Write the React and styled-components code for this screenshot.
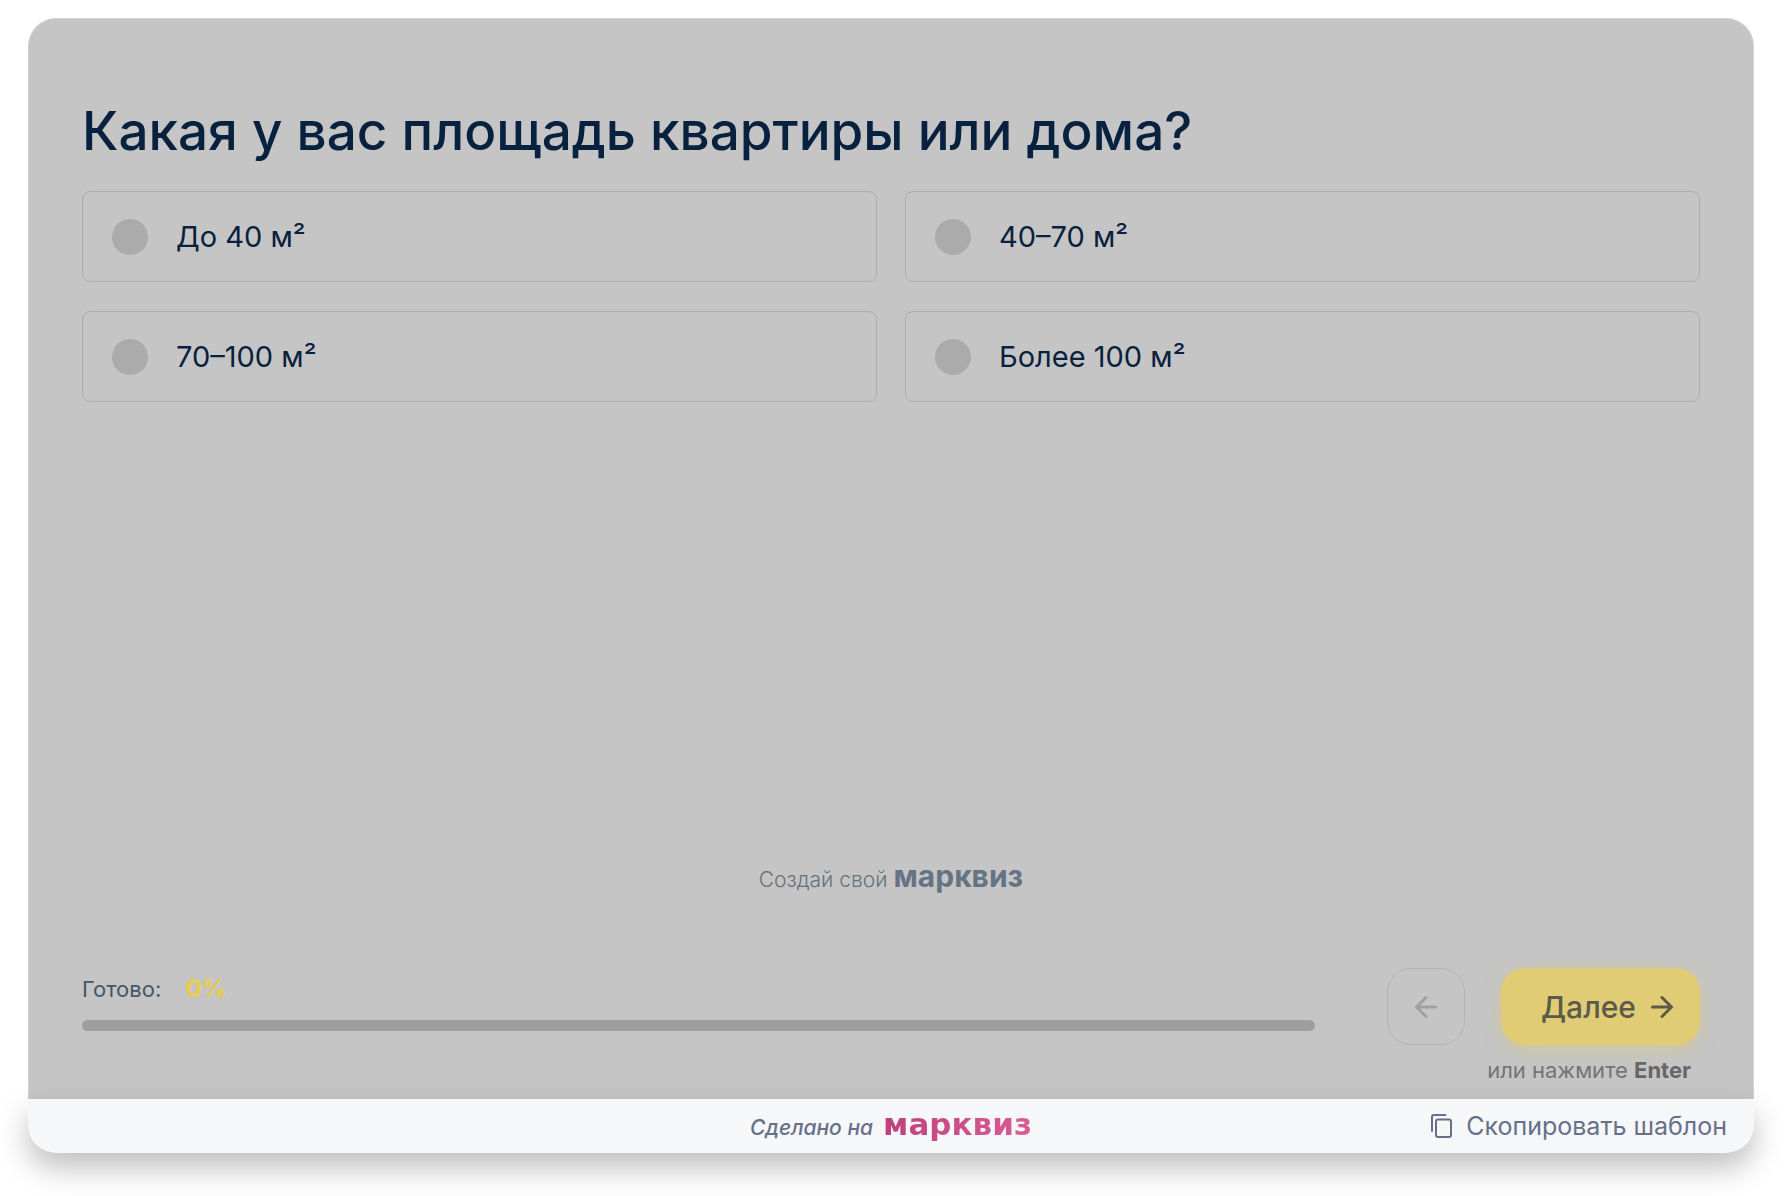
import React from "react";
import styled, { createGlobalStyle } from "styled-components";

const GlobalStyle = createGlobalStyle`
  *, *::before, *::after { box-sizing: border-box; }
  body { margin: 0; background: #fff; }
`;

const sans = `Inter, "Open Sans", "Noto Sans", sans-serif`;

const Page = styled.div`
  display: flex;
  min-height: 100vh;
  padding: 18px 36px 43px 28px;
  font-family: ${sans};
  color: #08213f;
`;

const Card = styled.main`
  flex: 1;
  display: flex;
  flex-direction: column;
`;

const Quiz = styled.form`
  flex: 1;
  display: flex;
  flex-direction: column;
  padding: 80px 53px 14px;
  border: 1px solid #d2d2d2;
  border-bottom: 0;
  border-radius: 28px 28px 0 0;
  background: #c5c5c5;
`;

const Title = styled.h1`
  margin: 0 0 28px;
  font-size: 53px;
  line-height: 64px;
  font-weight: 500;
`;

const Options = styled.div`
  display: grid;
  grid-template-columns: 1fr 1fr;
  gap: 29px 28px;
`;

const OptionLabel = styled.label`
  display: flex;
  align-items: center;
  gap: 28px;
  min-height: 91px;
  padding: 0 29px;
  border: 1px solid #adadad;
  border-radius: 8px;
  font-size: 29px;
  line-height: 36px;
  cursor: pointer;
`;

const Radio = styled.input`
  appearance: none;
  flex: none;
  width: 36px;
  height: 36px;
  margin: 0;
  border-radius: 50%;
  background: #ababab;
  &:checked { border: 10px solid #ababab; background: #e2cd72; }
`;

const Watermark = styled.a`
  display: flex;
  align-items: baseline;
  align-self: center;
  gap: 6px;
  margin: auto 0 70px;
  font-size: 21px;
  line-height: 36px;
  font-weight: 300;
  color: #66727d;
  text-decoration: none;
`;

const WatermarkBrand = styled.strong`
  font-size: 30px;
  font-weight: 700;
  color: #657484;
`;

const Bottom = styled.div`
  display: flex;
  align-items: flex-start;
  gap: 72px;
`;

const Progress = styled.div`
  flex: 1;
`;

const ProgressLabel = styled.label`
  display: flex;
  align-items: center;
  gap: 24px;
  margin-bottom: 10px;
  font-size: 22px;
  line-height: 42px;
  color: #45566a;
`;

const Percent = styled.strong`
  font-size: 24px;
  font-weight: 800;
  color: #e6cc55;
`;

const Track = styled.progress`
  appearance: none;
  display: block;
  width: 100%;
  height: 11px;
  border: 0;
  border-radius: 6px;
  overflow: hidden;
  background: #9e9e9e;
  &::-webkit-progress-bar { background: #9e9e9e; }
  &::-webkit-progress-value { background: #e6cc55; }
`;

const Actions = styled.div`
  display: flex;
  flex-direction: column;
  align-items: flex-end;
  gap: 10px;
`;

const Buttons = styled.div`
  display: flex;
  gap: 36px;
`;

const NavButton = styled.button`
  display: flex;
  align-items: center;
  justify-content: center;
  gap: 14px;
  height: 77px;
  border-radius: 24px;
  font: 500 30px/36px ${sans};
  ${({ $primary }) =>
    $primary
      ? `width: 199px; padding: 0 24px 0 38px; border: 0; color: #5d5a4c;
         background: #dfcc74; box-shadow: 0 4px 16px rgba(226, 205, 110, 0.5);`
      : `width: 78px; padding: 0; border: 1px solid #b4b4b4; color: #a1a1a1; background: none;`}
`;

const Hint = styled.p`
  margin: 0;
  padding-right: 9px;
  font-size: 22px;
  line-height: 30px;
  color: #747474;
  strong { color: #676767; }
`;

const Footer = styled.footer`
  display: grid;
  grid-template-columns: 1fr auto 1fr;
  align-items: center;
  min-height: 54px;
  padding: 0 27px;
  border-radius: 0 0 28px 28px;
  background: #f5f7f9;
  box-shadow: 0 15px 30px rgba(0, 0, 0, 0.25);
  color: #66708a;
`;

const MadeWith = styled.a`
  grid-column: 2;
  display: flex;
  align-items: baseline;
  gap: 10px;
  font-size: 21px;
  line-height: 36px;
  font-weight: 500;
  font-style: italic;
  color: inherit;
  text-decoration: none;
`;

const FooterBrand = styled.strong`
  font-family: "DejaVu Sans", sans-serif;
  font-size: 31px;
  font-style: normal;
  font-weight: 700;
  color: transparent;
  background: linear-gradient(90deg, #bd427c, #d95c94);
  background-clip: text;
`;

const CopyLink = styled.a`
  justify-self: end;
  display: flex;
  align-items: center;
  gap: 12px;
  font-size: 25px;
  line-height: 36px;
  color: inherit;
  text-decoration: none;
`;

const Arrow = ({ back }) => (
  <svg width="24" height="24" viewBox="0 0 24 24" fill="none" stroke="currentColor" strokeWidth="3" strokeLinecap="round" strokeLinejoin="round" aria-hidden="true">
    <path d={back ? "M21.500 12H2.500M12 2.500L2.500 12l9.500 9.500" : "M2.500 12h19M12 2.500l9.500 9.500-9.500 9.500"} />
  </svg>
);

const CopyIcon = () => (
  <svg width="26" height="26" viewBox="0 0 26 26" fill="none" stroke="currentColor" strokeWidth="2" strokeLinecap="round" strokeLinejoin="round" aria-hidden="true">
    <path d="M4 18V4a2 2 0 0 1 2-2h11.500" />
    <rect x="8" y="6.500" width="15" height="17.500" rx="2" />
  </svg>
);

const answers = ["До 40 м²", "40–70 м²", "70–100 м²", "Более 100 м²"];

export default function App() {
  return (
    <>
      <GlobalStyle />
      <Page>
        <Card>
          <Quiz onSubmit={(e) => e.preventDefault()}>
            <Title id="question">Какая у вас площадь квартиры или дома?</Title>
            <Options role="radiogroup" aria-labelledby="question">
              {answers.map((text, i) => (
                <OptionLabel key={text} htmlFor={`area-${i}`}>
                  <Radio type="radio" name="area" id={`area-${i}`} value={text} />
                  {text}
                </OptionLabel>
              ))}
            </Options>
            <Watermark href="#create">
              Создай свой <WatermarkBrand>марквиз</WatermarkBrand>
            </Watermark>
            <Bottom>
              <Progress>
                <ProgressLabel htmlFor="done">
                  Готово: <Percent>0%</Percent>
                </ProgressLabel>
                <Track id="done" value="0" max="100" />
              </Progress>
              <Actions>
                <Buttons>
                  <NavButton type="button" aria-label="Назад">
                    <Arrow back />
                  </NavButton>
                  <NavButton type="submit" $primary>
                    Далее <Arrow />
                  </NavButton>
                </Buttons>
                <Hint>
                  или нажмите <strong>Enter</strong>
                </Hint>
              </Actions>
            </Bottom>
          </Quiz>
          <Footer>
            <MadeWith href="#marquiz">
              Сделано на <FooterBrand>марквиз</FooterBrand>
            </MadeWith>
            <CopyLink href="#copy">
              <CopyIcon />
              Скопировать шаблон
            </CopyLink>
          </Footer>
        </Card>
      </Page>
    </>
  );
}
